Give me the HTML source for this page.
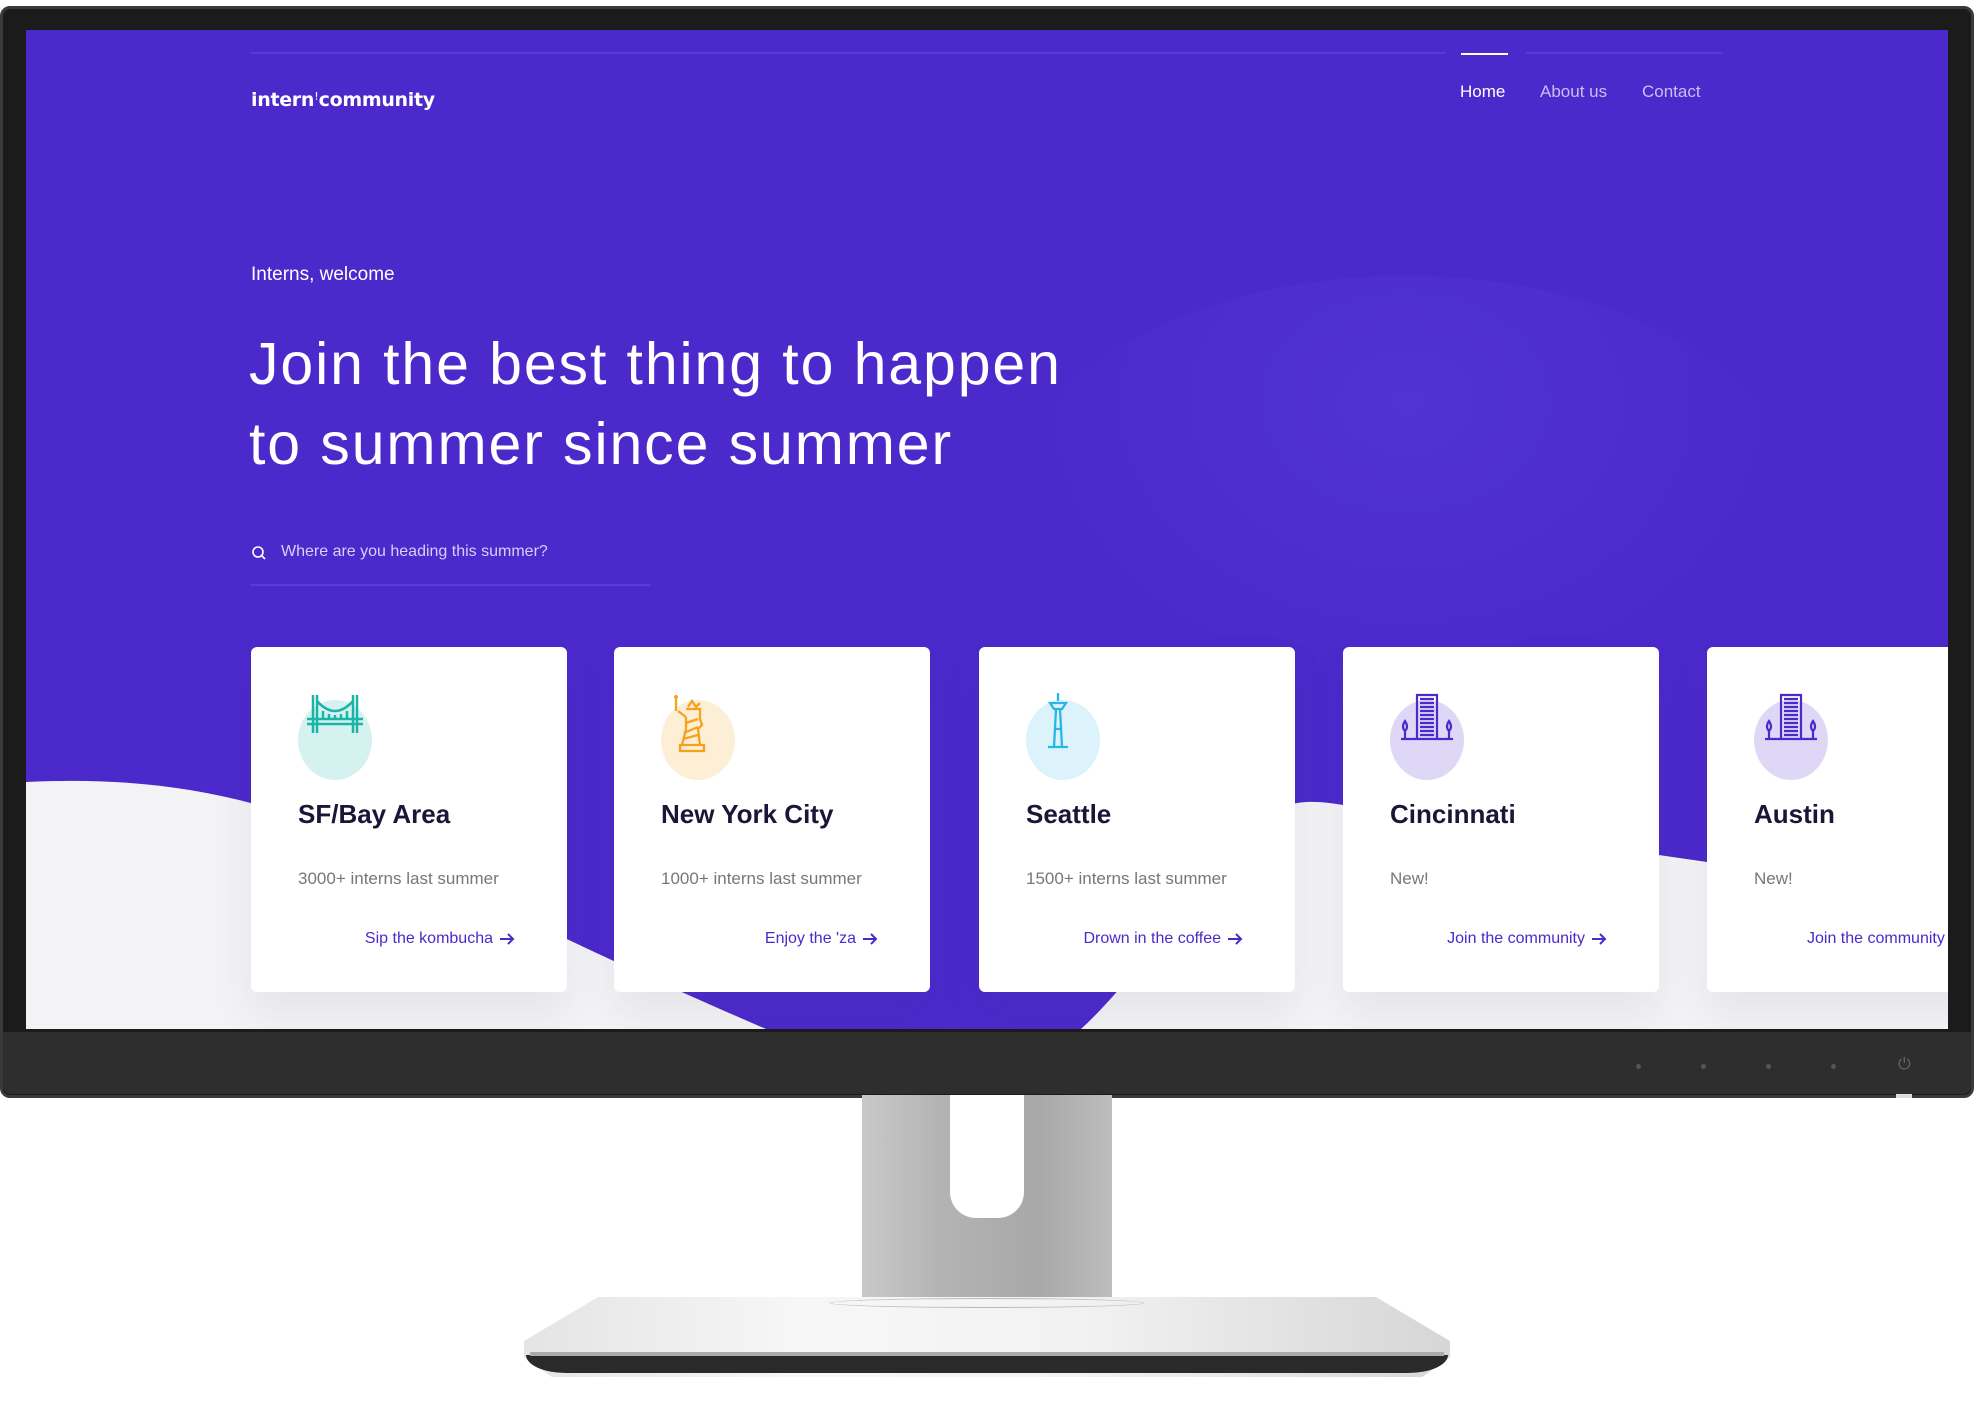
<!DOCTYPE html>
<html><head><meta charset="utf-8"><style>
*{margin:0;padding:0;box-sizing:border-box}
body{width:1974px;height:1403px;background:#fff;position:relative;overflow:hidden;font-family:"Liberation Sans",sans-serif}
.abs{position:absolute}
.bezel{left:0;top:6px;width:1974px;height:1092px;background:#1b1b1b;border-radius:10px;border:3px solid #3a3a3a}
.chin{left:3px;top:1032px;width:1968px;height:62px;background:#2e2e2e;border-radius:0 0 8px 8px}
.screen{left:26px;top:30px;width:1922px;height:999px;background:#4b29cb;overflow:hidden}
.card{position:absolute;top:617px;width:316px;height:345px;background:#fff;border-radius:6px;box-shadow:0 20px 40px rgba(60,60,90,.08)}
.card .circ{position:absolute;left:47px;top:53px;width:74px;height:80px;border-radius:50%}
.card svg.ic{position:absolute;left:54px;top:46px}
.card h3{position:absolute;left:47px;top:152px;font-size:26px;font-weight:bold;color:#1c1538}
.card p{position:absolute;left:47px;top:222px;font-size:17px;color:#777}
.card a{position:absolute;right:52px;top:283px;font-size:16px;color:#4b29cb;text-decoration:none;white-space:nowrap}
.card a svg{vertical-align:middle;margin-left:6px}
.nav{font-size:17px;color:#c9bff5;top:52px}
</style></head><body>
<div class="abs bezel"></div>
<div class="abs chin"></div>
<div class="abs" style="left:1636px;top:1064px;width:5px;height:5px;border-radius:50%;background:#555"></div>
<div class="abs" style="left:1701px;top:1064px;width:5px;height:5px;border-radius:50%;background:#555"></div>
<div class="abs" style="left:1766px;top:1064px;width:5px;height:5px;border-radius:50%;background:#555"></div>
<div class="abs" style="left:1831px;top:1064px;width:5px;height:5px;border-radius:50%;background:#555"></div>
<div class="abs" style="left:1898px;top:1056px;color:#666;font-size:16px">⏻</div>
<div class="abs" style="left:1896px;top:1094px;width:16px;height:4px;background:#ddd"></div>
<!-- stand -->
<div class="abs" style="left:862px;top:1095px;width:250px;height:210px;background:linear-gradient(90deg,#c9c9c9,#b4b4b4 30%,#a8a8a8 70%,#bdbdbd)"></div>
<div class="abs" style="left:950px;top:1095px;width:74px;height:123px;background:#fff;border-radius:0 0 26px 26px"></div>
<div class="abs" style="left:524px;top:1297px;width:926px;height:80px;background:linear-gradient(90deg,#e4e4e4,#f7f7f7 30%,#f2f2f2 60%,#d6d6d6);clip-path:polygon(8% 0,92% 0,100% 55%,100% 75%,97% 100%,3% 100%,0 75%,0 55%);"></div>
<div class="abs" style="left:526px;top:1355px;width:922px;height:18px;background:#2a2a2a;border-radius:0 0 40px 40px/0 0 18px 18px"></div>
<div class="abs" style="left:530px;top:1352px;width:914px;height:4px;background:#aaa"></div>
<div class="abs" style="left:830px;top:1298px;width:314px;height:10px;border:1px solid #bbb;border-radius:50%"></div>

<div class="abs screen">
<div class="abs" style="left:1000px;top:246px;width:760px;height:420px;border-radius:50%;background:radial-gradient(ellipse at 50% 30%,rgba(90,70,220,.35),rgba(75,41,203,0) 70%)"></div>
<svg class="abs" style="left:0;top:0" width="1922" height="999">
<path d="M0,999 L0,752 C150,745 260,770 420,850 C560,920 650,960 740,999 Z" fill="#f3f3f6"/>
<path d="M1055,999 C1120,940 1190,820 1260,776 C1290,765 1330,778 1400,792 C1560,815 1750,840 1922,870 L1922,999 Z" fill="#f3f3f6"/>
<line x1="225" y1="23" x2="1420" y2="23" stroke="#6a4fd8" stroke-width="1"/>
<line x1="1500" y1="23" x2="1697" y2="23" stroke="#6a4fd8" stroke-width="1"/>
<line x1="1435" y1="24" x2="1482" y2="24" stroke="#fff" stroke-width="2"/>
<line x1="225" y1="555" x2="625" y2="555" stroke="#6a4fd8" stroke-width="1"/>
<circle cx="232" cy="522" r="5" stroke="#fff" stroke-width="1.6" fill="none"/><line x1="236" y1="526" x2="239" y2="529" stroke="#fff" stroke-width="1.6"/>
</svg>
<div class="abs" style="left:225px;top:59px;font-size:19px;color:#fff;font-family:'DejaVu Sans',sans-serif;font-weight:bold;letter-spacing:-0.3px">intern<span style="font-weight:normal">ꜝ</span>community</div>
<div class="abs nav" style="left:1434px;color:#fff">Home</div>
<div class="abs nav" style="left:1514px">About us</div>
<div class="abs nav" style="left:1616px">Contact</div>
<div class="abs" style="left:225px;top:234px;font-size:19px;color:#fff">Interns, welcome</div>
<div class="abs" style="left:223px;top:294px;font-size:59px;color:#fff;line-height:80px;letter-spacing:1.9px">Join the best thing to happen<br>to summer since summer</div>
<div class="abs" style="left:255px;top:513px;font-size:16px;color:#d8d0fa">Where are you heading this summer?</div>

<div class="card" style="left:225px"><div class="circ" style="background:#d6f2f0"></div>
<svg class="ic" width="60" height="42" viewBox="0 0 60 42" fill="none" stroke="#1bb5a8" stroke-width="2.5"><path d="M8,2V40M12,2V40M48,2V40M52,2V40M2,26H58M2,31H58M12,8Q30,28 48,8M18,18V26M24,21V26M30,22V26M36,21V26M42,18V26"/></svg>
<h3>SF/Bay Area</h3><p>3000+ interns last summer</p><a>Sip the kombucha<svg width="16" height="12" viewBox="0 0 16 12" fill="none" stroke="#4b29cb" stroke-width="2"><path d="M1,6H14M9,1L14,6L9,11"/></svg></a></div>

<div class="card" style="left:588px"><div class="circ" style="background:#fdeed6"></div>
<svg class="ic" width="50" height="60" viewBox="0 0 50 60" fill="none" stroke="#f7a21b" stroke-width="2.3"><path d="M8,2V18M6,4H10M10,18L18,24M20,14L24,8L28,14L32,10M18,16H32V26L34,32L30,36L32,52H14L18,36L18,24M18,30L30,26M16,40L30,34M15,46L30,42M12,52H36V58H12Z"/></svg>
<h3>New York City</h3><p>1000+ interns last summer</p><a>Enjoy the 'za<svg width="16" height="12" viewBox="0 0 16 12" fill="none" stroke="#4b29cb" stroke-width="2"><path d="M1,6H14M9,1L14,6L9,11"/></svg></a></div>

<div class="card" style="left:953px"><div class="circ" style="background:#ddf3fb"></div>
<svg class="ic" width="50" height="60" viewBox="0 0 50 60" fill="none" stroke="#27b7e6" stroke-width="2.3"><path d="M25,0V8M17,10H33L29,16H21ZM23,16L21,54M27,16L29,54M15,54H35M21,36H29"/></svg>
<h3>Seattle</h3><p>1500+ interns last summer</p><a>Drown in the coffee<svg width="16" height="12" viewBox="0 0 16 12" fill="none" stroke="#4b29cb" stroke-width="2"><path d="M1,6H14M9,1L14,6L9,11"/></svg></a></div>

<div class="card" style="left:1317px"><div class="circ" style="background:#ded8f6"></div>
<svg class="ic" width="60" height="50" viewBox="0 0 60 50" fill="none" stroke="#4b29cb" stroke-width="2.2"><path d="M20,2H40V46H20ZM23,6H37M23,10H37M23,14H37M23,18H37M23,22H37M23,26H37M23,30H37M23,34H37M23,38H37M23,42H37M8,28Q4,34 8,38Q12,34 8,28ZM8,38V46M52,28Q48,34 52,38Q56,34 52,28ZM52,38V46M4,46H56"/></svg>
<h3>Cincinnati</h3><p>New!</p><a>Join the community<svg width="16" height="12" viewBox="0 0 16 12" fill="none" stroke="#4b29cb" stroke-width="2"><path d="M1,6H14M9,1L14,6L9,11"/></svg></a></div>

<div class="card" style="left:1681px"><div class="circ" style="background:#ded8f6"></div>
<svg class="ic" width="60" height="50" viewBox="0 0 60 50" fill="none" stroke="#4b29cb" stroke-width="2.2"><path d="M20,2H40V46H20ZM23,6H37M23,10H37M23,14H37M23,18H37M23,22H37M23,26H37M23,30H37M23,34H37M23,38H37M23,42H37M8,28Q4,34 8,38Q12,34 8,28ZM8,38V46M52,28Q48,34 52,38Q56,34 52,28ZM52,38V46M4,46H56"/></svg>
<h3>Austin</h3><p>New!</p><a style="left:100px;right:auto">Join the community</a></div>
</div>
</body></html>
